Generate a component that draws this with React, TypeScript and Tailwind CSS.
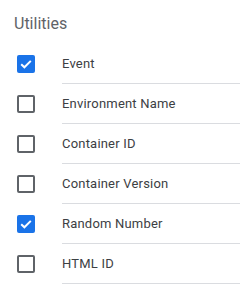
const items = [
  { name: 'Event', checked: true },
  { name: 'Environment Name', checked: false },
  { name: 'Container ID', checked: false },
  { name: 'Container Version', checked: false },
  { name: 'Random Number', checked: true },
  { name: 'HTML ID', checked: false },
];

function Checkbox({ checked }: { checked: boolean }) {
  if (checked) {
    return (
      <div className="w-[18px] h-[18px] rounded-[2px] bg-[#1a73e8] flex items-center justify-center">
        <svg width="18" height="18" viewBox="0 0 18 18">
          <polyline points="4.2,9.2 7.4,12.3 13.8,5.9" fill="none" stroke="white" strokeWidth="2" />
        </svg>
      </div>
    );
  }
  return <div className="w-[18px] h-[18px] rounded-[2px] border-2 border-[#5f6368]" />;
}

export default function App() {
  return (
    <div className="w-[240px] h-[300px] bg-white font-['Roboto',sans-serif]">
      <div className="h-[44px] pl-[14px] pt-[3px] flex items-center text-[16px] text-[#5f6368]">Utilities</div>
      {items.map((item) => (
        <div key={item.name} className="flex items-center h-10">
          <div className="w-[62px] pl-[17px] flex items-center">
            <Checkbox checked={item.checked} />
          </div>
          <div className="flex-1 h-10 flex items-center border-b border-[#dadce0] text-[13px] tracking-[0.2px] text-[#3c4043]">
            {item.name}
          </div>
        </div>
      ))}
    </div>
  );
}
